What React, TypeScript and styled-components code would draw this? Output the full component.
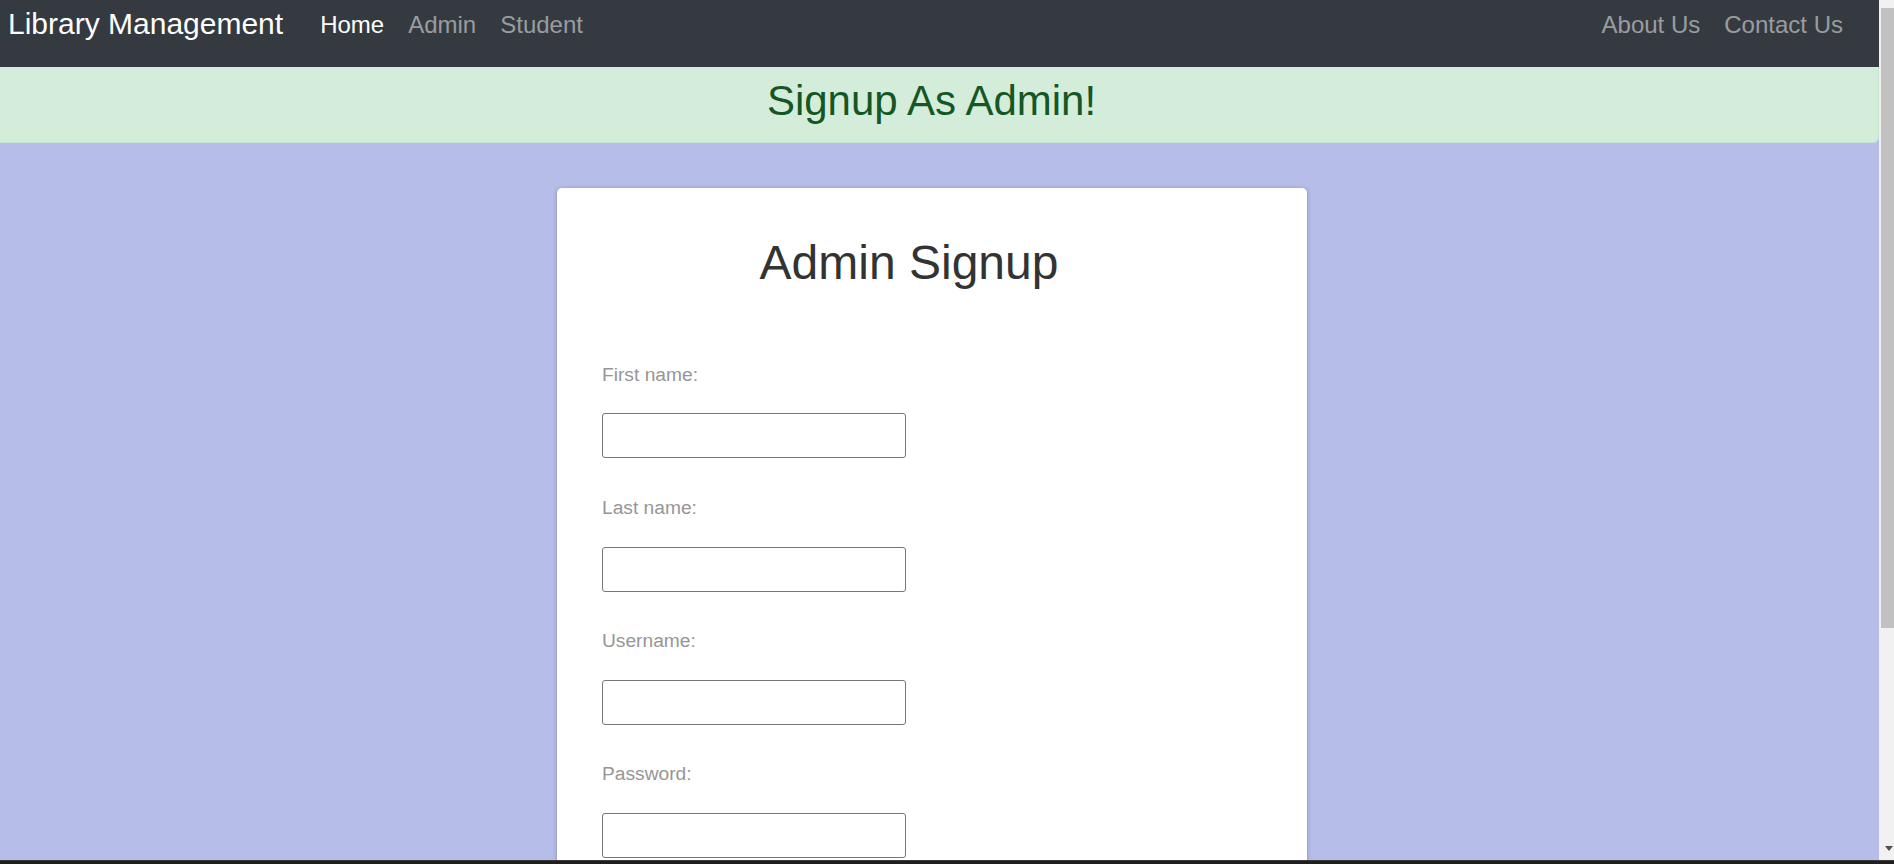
import React from "react";
import styled, { createGlobalStyle } from "styled-components";

const GlobalStyle = createGlobalStyle`
  html, body {
    margin: 0;
    padding: 0;
    height: 100%;
    overflow: hidden;
    font-family: "Liberation Sans", Arial, sans-serif;
  }
  * { box-sizing: border-box; }
`;

const Shell = styled.div`
  display: flex;
  flex-direction: column;
  height: 864px;
  width: 1894px;
`;

const Window = styled.div`
  display: flex;
  flex-direction: row;
  height: 860px;
`;

const Main = styled.div`
  flex: 1;
  min-width: 0;
  display: flex;
  flex-direction: column;
  background: #b5bde8;
  overflow: hidden;
`;

const Navbar = styled.nav`
  display: flex;
  align-items: flex-start;
  height: 67px;
  padding: 0 24px 0 8px;
  background: #343a40;
  flex-shrink: 0;
`;

const Brand = styled.a`
  font-size: 30px;
  line-height: 36px;
  padding-top: 6px;
  color: #fff;
  margin-right: 25px;
  white-space: nowrap;
  text-decoration: none;
`;

const NavGroup = styled.div<{ $right?: boolean }>`
  display: flex;
  margin-left: ${(p) => (p.$right ? "auto" : "0")};
`;

const NavLink = styled.a<{ $active?: boolean }>`
  font-size: 24px;
  line-height: 28px;
  padding: 11px 12px 0;
  color: ${(p) => (p.$active ? "#ffffff" : "rgba(255,255,255,0.5)")};
  text-decoration: none;
  white-space: nowrap;
`;

const Banner = styled.div`
  height: 76px;
  flex-shrink: 0;
  padding: 9px 15px 0 0;
  background: #d4edda;
  border-bottom: 1px solid #c3e6cb;
  border-right: 1px solid #c3e6cb;
  border-bottom-right-radius: 6px;
  text-align: center;
`;

const BannerTitle = styled.h3`
  margin: 0;
  font-size: 42px;
  line-height: 1.2;
  font-weight: 400;
  color: #155724;
`;

const Content = styled.div`
  flex: 1;
  padding: 45px 15px 0 0;
`;

const Card = styled.div`
  width: 750px;
  margin: 0 auto;
  min-height: 900px;
  background: #fff;
  border-radius: 5px;
  box-shadow: 0 1px 4px rgba(40, 40, 90, 0.35);
  padding: 46px 45px 0 45px;
`;

const CardTitle = styled.h2`
  margin: 0 46px 0 0;
  font-size: 48px;
  line-height: 1.2;
  font-weight: 400;
  color: #333;
  text-align: center;
`;

const Form = styled.form`
  margin-top: 69px;
  display: flex;
  flex-direction: column;
`;

const Field = styled.div`
  display: flex;
  flex-direction: column;
  align-items: flex-start;
  margin-bottom: 35.5px;
`;

const Label = styled.label`
  font-size: 19.2px;
  line-height: 28.8px;
  color: #969696;
  margin-bottom: 24px;
`;

const Input = styled.input`
  width: 304px;
  height: 45px;
  border: 1px solid #767676;
  border-radius: 3px;
  background: #fff;
  font-size: 19px;
  padding: 0 6px;
  outline: none;
`;

const ScrollTrack = styled.div`
  width: 15px;
  flex-shrink: 0;
  background: #f1f1f1;
  display: flex;
  flex-direction: column;
  align-items: flex-start;
`;

const ScrollThumb = styled.div`
  margin-top: 8px;
  margin-left: 2px;
  width: 13px;
  height: 620px;
  background: #c1c1c1;
`;

const ScrollSpacer = styled.div`
  flex: 1;
`;

const ScrollArrow = styled.div`
  margin: 0 0 9px 6px;
  width: 0;
  height: 0;
  border-left: 4px solid transparent;
  border-right: 4px solid transparent;
  border-top: 5px solid #505050;
`;

const Taskbar = styled.div`
  height: 4px;
  background: linear-gradient(to bottom, #3a3a3a 0 1px, #1e1e1e 1px);
`;

const fields = ["First name:", "Last name:", "Username:", "Password:"];

export default function App() {
  return (
    <>
      <GlobalStyle />
      <Shell>
        <Window>
          <Main>
            <Navbar>
              <Brand>Library Management</Brand>
              <NavGroup>
                <NavLink $active>Home</NavLink>
                <NavLink>Admin</NavLink>
                <NavLink>Student</NavLink>
              </NavGroup>
              <NavGroup $right>
                <NavLink>About Us</NavLink>
                <NavLink>Contact Us</NavLink>
              </NavGroup>
            </Navbar>
            <Banner>
              <BannerTitle>Signup As Admin!</BannerTitle>
            </Banner>
            <Content>
              <Card>
                <CardTitle>Admin Signup</CardTitle>
                <Form onSubmit={(e) => e.preventDefault()}>
                  {fields.map((f) => (
                    <Field key={f}>
                      <Label>{f}</Label>
                      <Input type={f === "Password:" ? "password" : "text"} />
                    </Field>
                  ))}
                </Form>
              </Card>
            </Content>
          </Main>
          <ScrollTrack>
            <ScrollThumb />
            <ScrollSpacer />
            <ScrollArrow />
          </ScrollTrack>
        </Window>
        <Taskbar />
      </Shell>
    </>
  );
}
